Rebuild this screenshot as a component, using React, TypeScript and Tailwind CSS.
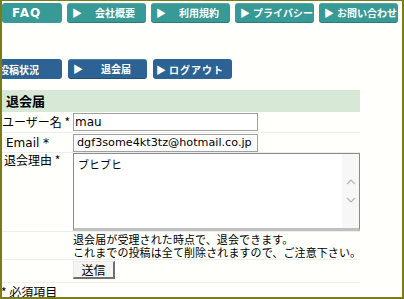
const font = { fontFamily: '"Noto Sans CJK JP", "Liberation Sans", sans-serif' };

function NavButton({ label, color }: { label: string; color: string }) {
  return (
    <div
      className={`w-[79px] h-[20px] ${color} rounded-[3px] flex items-center text-white font-bold text-[10px] leading-none whitespace-nowrap shadow-[inset_0_-1px_0_rgba(0,0,0,0.2),inset_0_1px_0_rgba(255,255,255,0.15)] overflow-hidden shrink-0 pl-[5px]`}
    >
      <span className="text-[10px] mr-[2px]">▶</span>
      <span className="flex-1 text-center">{label}</span>
    </div>
  );
}

export default function App() {
  return (
    <div
      className="w-[404px] h-[299px] bg-[#fffffc] border-[#7c7c14] border-t-[1px] border-l-[2px] border-r-[2px] border-b-[2px] overflow-hidden text-[11px] text-black"
      style={font}
    >
      {/* top nav */}
      <div className="flex gap-[5px] mt-[2px]">
        <div className="w-[60px] h-[20px] bg-[#379a97] rounded-[3px] flex items-center pl-[10px] text-white font-bold text-[12px] tracking-[1px] shrink-0" style={{ fontFamily: '"DejaVu Sans", sans-serif' }}>
          FAQ
        </div>
        <NavButton label="会社概要" color="bg-[#379a97]" />
        <NavButton label="利用規約" color="bg-[#379a97]" />
        <NavButton label="プライバシー" color="bg-[#379a97]" />
        <NavButton label="お問い合わせ" color="bg-[#379a97]" />
      </div>

      {/* member nav */}
      <div className="flex gap-[6px] mt-[36px] -ml-[2px]">
        <div className="w-[62px] h-[20px] bg-[#2c6394] rounded-[3px] flex items-center text-white font-bold text-[10px] whitespace-nowrap overflow-hidden shrink-0">
          <span className="-ml-[1px]">投稿状況</span>
        </div>
        <NavButton label="退会届" color="bg-[#2c6394]" />
        <div className="w-[79px] h-[20px] bg-[#2c6394] rounded-[3px] flex items-center pl-[3px] text-white font-bold text-[10px] whitespace-nowrap shrink-0">
          <span className="mr-[3px]">▶</span>
          <span className="tracking-[1px]">ログアウト</span>
        </div>
      </div>

      {/* form table */}
      <div className="mt-[11px] w-[358px] leading-[14px]">
        <div className="h-[22px] bg-[#d8e8d6] flex items-center pl-[4px] font-bold text-[13px]">退会届</div>

        <div className="flex h-[21px] border-b border-[#eeeeee] items-center text-[12px]">
          <div className="w-[71px] shrink-0 whitespace-nowrap">ユーザー名 *</div>
          <div className="w-[185px] h-[18px] border border-[#a0a0a0] bg-white flex items-center px-[1px]" style={{ fontFamily: '"DejaVu Sans", sans-serif', fontSize: 12 }}>
            mau
          </div>
        </div>

        <div className="flex h-[20px] border-b border-[#eeeeee] items-center">
          <div className="w-[71px] shrink-0 pl-[4px]" style={{ fontFamily: '"DejaVu Sans", sans-serif', fontSize: 12 }}>Email *</div>
          <div className="w-[185px] h-[18px] border border-[#a0a0a0] bg-white flex items-center px-[3px] whitespace-nowrap overflow-hidden" style={{ fontFamily: '"DejaVu Sans", sans-serif', fontSize: 11.2 }}>
            dgf3some4kt3tz@hotmail.co.jp
          </div>
        </div>

        <div className="flex border-b border-[#eeeeee] text-[12px]">
          <div className="w-[71px] shrink-0 pl-[2px]">退会理由 *</div>
          <div className="w-[287px] h-[78px] border border-[#8a8a8a] border-b-[3px] border-b-[#c0c0c0] bg-white flex">
            <div className="flex-1 px-[4px] pt-[3px] text-[11px]">ブヒブヒ</div>
            <div className="w-[17px] bg-[#f7f7f7] flex flex-col justify-center items-center gap-[12px] text-[#b5b5b5]">
              <svg width="10" height="6" viewBox="0 0 10 6"><path d="M1 5L5 1L9 5" fill="none" stroke="currentColor" strokeWidth="1.2" /></svg>
              <svg width="10" height="6" viewBox="0 0 10 6"><path d="M1 1L5 5L9 1" fill="none" stroke="currentColor" strokeWidth="1.2" /></svg>
            </div>
          </div>
        </div>

        <div className="flex border-b border-[#eeeeee] pt-[1px]">
          <div className="w-[71px] shrink-0" />
          <p className="leading-[13px] whitespace-nowrap tracking-[0.1px]">
            退会届が受理された時点で、退会できます。
            <br />
            これまでの投稿は全て削除されますので、ご注意下さい。
          </p>
        </div>

        <div className="flex border-b border-[#eeeeee] pt-[1px] pb-[3px]">
          <div className="w-[71px] shrink-0" />
          <div className="w-[42px] h-[18px] bg-[#f4f4f4] border border-[#e8e8e8] border-r-[#707070] border-b-[#707070] border-r-2 border-b-2 flex items-center justify-center text-[12px]">
            送信
          </div>
        </div>
      </div>

      <div className="mt-[2px] -ml-[1px] leading-[13px] text-[12px]">* 必須項目</div>
    </div>
  );
}
